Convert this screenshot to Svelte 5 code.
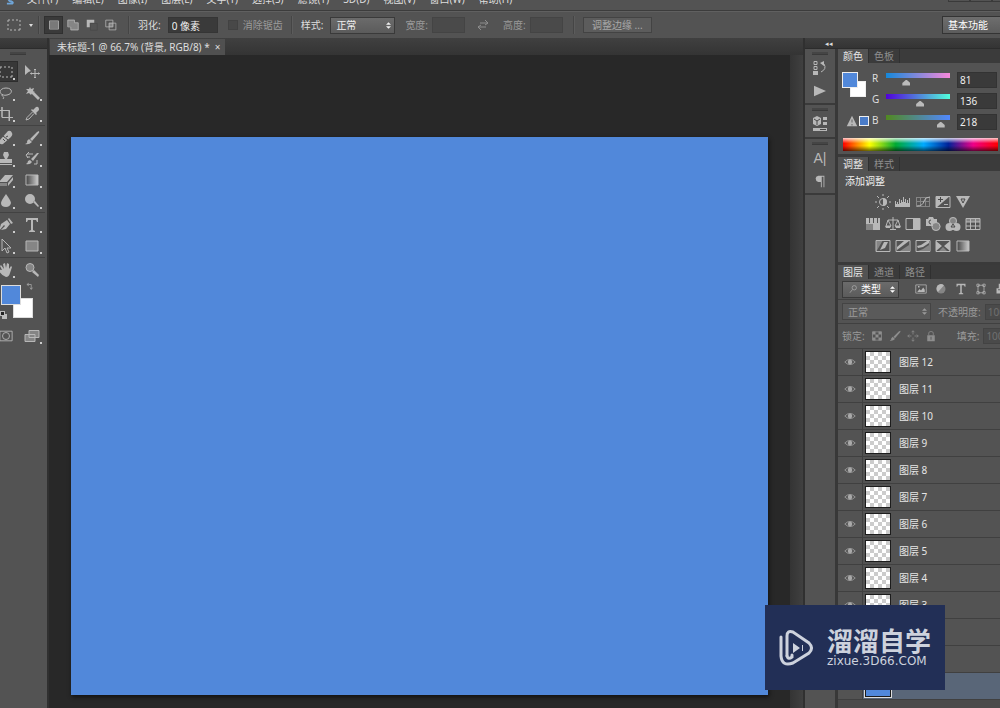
<script lang="ts">
  type Shape = { soft?: string; fill?: string; line?: string; dim?: string };

  const menus = ['文件(F)', '编辑(E)', '图像(I)', '图层(L)', '文字(Y)', '选择(S)', '滤镜(T)', '3D(D)', '视图(V)', '窗口(W)', '帮助(H)'];

  // All icons are drawn on a 16x16 grid
  const icons: Record<string, Shape> = {
    marquee: { line: 'M2 5V3H4M6 3H8M10 3H12M14 3V5M14 7V9M14 11V13H12M10 13H8M6 13H4M2 13V11M2 9V7' },
    move: { fill: 'M1 1L7 7L4.500 8L1 11Z', line: 'M11 5V14M6.500 9.500H15.500M10 6L11 5L12 6M10 13L11 14L12 13M7.500 8.500L6.500 9.500L7.500 10.500M14.500 8.500L15.500 9.500L14.500 10.500' },
    lasso: { line: 'M5 10C0 8 2 3 8 3C15 3 15 9 9 10C6 11 4 9 4 10C4 12 7 11 5 14' },
    wand: { fill: 'M6 7L8 5L16 13L14 15ZM6 2L7 4L10 3L9 6L11 7L8 8L7 10L5 8L2 9L4 6L2 4L5 4Z' },
    crop: { line: 'M4 1V11.500H15M1 4.500H11.500V15', soft: 'M3 1H5V11H3ZM10 4H12V15H10Z' },
    dropper: { fill: 'M9 4L12 1Q15 0 15 4L12 7L13 8L12 9L7 4L8 3Z', line: 'M8.500 6L3 11.500L2 14L5 13L10 7.500' },
    heal: { fill: 'M1 11L10 1Q13 0 14 3Q15 5 13 7L5 14Q1 15 1 11Z', dim: 'M5 6L10 10M10 6L8 7M5 9L7 11' },
    brush: { fill: 'M15 1Q16 2 14 4L8 11L6 9L13 2ZM5 9L8 12Q5 15 1 14Q4 13 3 11Z' },
    stamp: { fill: 'M6 1H10L11 4L9 8H14V12H2V8H7L5 4ZM2 13H14V14H2Z' },
    history: { fill: 'M15 2L9 10L7 8L13 2ZM6 9L8 11Q6 14 2 13Q4 12 4 10Z', line: 'M3 3H9M3 6H6M5 1L2 4L4 7M10 13H13V9' },
    eraser: { fill: 'M7 3H15L9 10H1ZM15 5V8L10 14V11Z', soft: 'M1 11H9V14H2Z' },
    gradient: { line: 'M2 3H14V13H2Z' },
    drop: { fill: 'M8 1Q13 8 13 10Q12 14 8 14Q3 14 3 10Q3 8 8 1Z' },
    dodge: { fill: 'M6 1A5 5 0 1 0 6 11A5 5 0 1 0 6 1ZM9 9L11 8L15 13L14 14Z' },
    pen: { fill: 'M1 14L3 7L9 3L12 7L8 12L3 13L7 9L6 8ZM10 2L11 1L15 6L13 7Z' },
    type: { fill: 'M2 1H14V5H13L12 3H9V13L11 14V15H5V14L7 13V3H4L3 5H2Z' },
    arrow: { line: 'M4 1V13L7 10L9 15L11 14L9 10H13Z' },
    rect: { soft: 'M2 3H14V13H2Z', line: 'M2 3H14V13H2Z' },
    hand: { fill: 'M4 8L2 4L3 3L6 7L5 2L7 1L8 6L9 1L11 2V7L13 4L14 5L12 11Q11 15 8 15Q4 14 1 9Q2 7 4 8Z' },
    zoom: { soft: 'M6 1.500A4 4 0 1 0 6 9.500A4 4 0 1 0 6 1.500', line: 'M6 1.500A4 4 0 1 0 6 9.500A4 4 0 1 0 6 1.500', fill: 'M10 8L15 13L14 15L8 10Z' },
    swap: { line: 'M4 4H10V11M6 2L3 4L6 6M8 9L10 12L12 9' },
    mask: { line: 'M1 2.500H15V13.500H1ZM8 4A4 4 0 1 0 8 12A4 4 0 1 0 8 4' },
    screens: { soft: 'M5 3H15V9H5ZM1 7H11V13H1Z', line: 'M5 2.500H15V9.500H5ZM1 6.500H11V13.500H1Z' },
    fresh: { soft: 'M2 3H14V13H2Z', line: 'M2 2.500H14V13.500H2Z' },
    add: { soft: 'M1 1H10V5H15V15H5V10H1Z', line: 'M1 1.500H10V5H15V14.500H5V10.500H1Z' },
    subtract: { fill: 'M1 1H11V5H5V11H1Z', dim: 'M6 6H15V15H6Z' },
    intersect: { soft: 'M5 5H11V11H5Z', line: 'M1 1.500H10.500V10.500H1ZM5.500 5.500H14.500V14.500H5.500Z' },
    exchange: { line: 'M5 6H13M10 3L13 6L10 8M11 10H3M6 13L3 10L6 8' },
    states: { line: 'M2 1.500H5V4.500H2ZM2 6.500H5V9.500H2ZM9 12Q15 9 12 4', fill: 'M1 11H6V15H1ZM8 3L12 1V6Z' },
    play: { fill: 'M0 1L16 8L0 15Z' },
    library: { fill: 'M5 0L9 2V8L5 10L1 8V2ZM11 1H15V4H11ZM11 6H15V9H11ZM1 12H15V15H1Z', dim: 'M2 3L5 5L8 3M5 5V9M8 13.500H14' },
    pilcrow: { fill: 'M6 2H13V15H12V3H10V15H9V9H6Q3 8 3 5Q3 3 6 2Z' },
    warn: { fill: 'M8 1L15 15H1Z', dim: 'M8 6V10M8 12V14' },
    sun: { line: 'M8 4.500A3.500 3.500 0 1 0 8 11.500A3.500 3.500 0 1 0 8 4.500M8 0V2M8 14V16M0 8H2M14 8H16M2 2L4 4M12 12L14 14M14 2L12 4M4 12L2 14', fill: 'M8 4A4 4 0 0 1 8 12Z' },
    levels: { fill: 'M0 13V7H1V10H2V8H3V10H4V5H5V9H6V6H7V8H8V3H9V8H10V5H11V9H12V6H13V9H14V4H15V13Z' },
    curves: { soft: 'M1 3H15V4H1ZM1 7H15V8H1ZM1 12H15V13H1ZM1 3H2V13H1ZM5 3H6V13H5ZM10 3H11V13H10ZM14 3H15V13H14Z', line: 'M2 12Q8 12 9 7Q10 3 15 3' },
    exposure: { fill: 'M1 2H15L1 14Z', line: 'M1 2.500H15V13.500H1ZM9 10.500H13', dim: 'M3 5.500H8M5.500 3V8' },
    vibrance: { fill: 'M1 2H15L8 14Z', dim: 'M6 5H10L8 9Z' },
    hue: { soft: 'M1 8H8V14H1Z', fill: 'M1 2H4V7H1ZM5 2H8V7H5ZM9 2H12V7H9ZM13 2H15V7H13ZM8 8H15V14H8ZM1 7H15V8H1Z' },
    balance: { line: 'M8 1V13M3 4H13M3 4L1 10H6ZM13 4L10 10H15ZM5 13.500H11', fill: 'M0 10H6L5 12H1ZM10 10H16L15 12H11Z' },
    bw: { line: 'M1 2.500H15V13.500H1Z', fill: 'M8 2H15V14H8Z' },
    filter: { fill: 'M1 3H3L4 1H8L9 3H12V7H8V10H1Z', soft: 'M11 6A4.500 4.500 0 1 0 11 15A4.500 4.500 0 1 0 11 6', line: 'M11 6.500A4 4 0 1 0 11 14.500A4 4 0 1 0 11 6.500', dim: 'M6 4A2 2 0 1 0 6 8' },
    mixer: { soft: 'M8 1A4 4 0 1 0 8 9A4 4 0 1 0 8 1', line: 'M8 1.500A3.500 3.500 0 1 0 8 8.500A3.500 3.500 0 1 0 8 1.500', fill: 'M4.500 7A4 4 0 1 0 4.500 15A4 4 0 1 0 4.500 7M11.500 7A4 4 0 1 0 11.500 15A4 4 0 1 0 11.500 7', dim: 'M8 8L6 11H10Z' },
    lookup: { soft: 'M1 2H15V6H1Z', line: 'M1 2.500H15V13.500H1ZM1 6H15M1 10H15M5.500 3V13M10.500 3V13' },
    invert: { line: 'M1 2.500H15V13.500H1Z', soft: 'M1 2H8L1 14Z', fill: 'M9 4H13L10 10L5 12L7 8Z' },
    poster: { line: 'M1 2.500H15V13.500H1Z', fill: 'M2 9L9 3H14L2 12Z', soft: 'M5 13L14 7V13Z' },
    threshold: { line: 'M1 2.500H15V13.500H1Z', fill: 'M2 8L6 7L12 3H14V5L8 9L3 10Z', soft: 'M3 13L8 11L14 7V13Z' },
    selective: { line: 'M1 2.500H15V13.500H1Z', fill: 'M1 3L7 8L1 13ZM15 3L9 8L15 13Z', soft: 'M4 13L8 9L12 13Z' },
    image: { line: 'M1 2.500H15V13.500H1Z', fill: 'M3 12L6 8L8 10L11 6L13 9V12ZM4 4H6V6H4Z' },
    half: { soft: 'M8 2A6 6 0 1 0 8 14A6 6 0 1 0 8 2', fill: 'M12 3A6 6 0 1 0 4 12Z' },
    path: { line: 'M4 3H12M4 13H12M4 4V12M12 4V12M2.500 1.500H5.500V4.500H2.500ZM10.500 1.500H13.500V4.500H10.500ZM2.500 11.500H5.500V14.500H2.500ZM10.500 11.500H13.500V14.500H10.500Z' },
    smart: { fill: 'M5 1H11V7H15V14H2V7H5Z', dim: 'M4 9H13' },
    checker: { line: 'M2 2.500H14V13.500H2Z', fill: 'M2 2H6V6H2ZM10 2H14V6H10ZM6 6H10V10H6ZM2 10H6V14H2ZM10 10H14V14H10Z' },
    cross: { line: 'M8 1V6M8 10V15M1 8H6M10 8H15M6 3L8 1L10 3M6 13L8 15L10 13M3 6L1 8L3 10M13 6L15 8L13 10' },
    lock: { line: 'M5 7V4Q5 2 8 2Q11 2 11 4V7', fill: 'M3 7H13V15H3Z', dim: 'M8 9V13' },
    search: { line: 'M10 2.500A3.500 3.500 0 1 0 10 9.500A3.500 3.500 0 1 0 10 2.500M7 9L3 14' },
    eye: { line: 'M1 8Q8 1 15 8Q8 15 1 8Z', fill: 'M8 5A3 3 0 1 0 8 11A3 3 0 1 0 8 5' }
  };

  const toolGroups = [
    ['marquee', 'move', 'lasso', 'wand', 'crop', 'dropper'],
    ['heal', 'brush', 'stamp', 'history', 'eraser', 'gradient', 'drop', 'dodge'],
    ['pen', 'type', 'arrow', 'rect'],
    ['hand', 'zoom']
  ];
  const noFlyout = ['move', 'zoom'];
  const selectionModes = ['fresh', 'add', 'subtract', 'intersect'];
  const adjustments = [
    ['sun', 'levels', 'curves', 'exposure', 'vibrance'],
    ['hue', 'balance', 'bw', 'filter', 'mixer', 'lookup'],
    ['invert', 'poster', 'threshold', 'selective', 'gradient']
  ];
  const layers = Array.from({ length: 12 }, (_, i) => `图层 ${12 - i}`);

  let activeTool = $state('marquee');
  let mode = $state('fresh');
  let color = $state([
    { name: 'R', value: 81 },
    { name: 'G', value: 136 },
    { name: 'B', value: 218 }
  ]);
  let current = $derived(`rgb(${color.map((c) => c.value).join(',')})`);
</script>

{#snippet icon(name: string, size = 'mid')}
  <svg class="icon {size}" viewBox="0 0 16 16" aria-hidden="true">
    {#if name === 'gradient'}
      <defs>
        <linearGradient id="fade"><stop stop-color="#444" /><stop offset="1" stop-color="#ccc" /></linearGradient>
      </defs>
      <rect x="2" y="3" width="12" height="10" fill="url(#fade)" />
    {/if}
    {#if icons[name].soft}<path class="soft" d={icons[name].soft} />{/if}
    {#if icons[name].fill}<path class="fill" d={icons[name].fill} />{/if}
    {#if icons[name].line}<path class="line" d={icons[name].line} />{/if}
    {#if icons[name].dim}<path class="dim" d={icons[name].dim} />{/if}
  </svg>
{/snippet}

{#snippet updown()}
  <svg class="updown" viewBox="0 0 6 8" aria-hidden="true"><path d="M0 3L3 0L6 3ZM0 5L3 8L6 5Z" /></svg>
{/snippet}

<div class="app" style:--current={current}>
  <nav class="menubar">
    <svg class="logo" viewBox="0 0 10 10" aria-hidden="true"><path d="M9 1H4Q1 2 4 5Q9 6 7 8H1" /></svg>
    {#each menus as menu}
      <button>{menu}</button>
    {/each}
    <span class="window_buttons"><i></i><i></i><i></i></span>
  </nav>

  <div class="options">
    <button class="preset" aria-label="工具预设">{@render icon('marquee')}<span class="caret"></span></button>
    <span class="divider"></span>
    <div class="modes">
      {#each selectionModes as m}
        <button class:active={mode === m} aria-label={m} onclick={() => (mode = m)}>{@render icon(m, 'small')}</button>
      {/each}
    </div>
    <span class="divider"></span>
    <label class="field">羽化: <input class="feather" value="0 像素" /></label>
    <label class="check off"><input type="checkbox" disabled />消除锯齿</label>
    <span class="divider"></span>
    <label class="field">样式:
      <span class="select style_select"><select><option>正常</option></select>{@render updown()}</span>
    </label>
    <label class="field off">宽度: <input class="dimension" disabled /></label>
    <span class="exchange off">{@render icon('exchange')}</span>
    <label class="field off">高度: <input class="dimension" disabled /></label>
    <span class="divider"></span>
    <button class="refine" disabled>调整边缘 ...</button>
    <button class="workspace">基本功能</button>
  </div>

  <main>
    <aside class="tools">
      <div class="strip"></div>
      <span class="grip"></span>
      <div class="tool_list">
        {#each toolGroups as group}
          <div class="group">
            {#each group as tool}
              <button class="tool" class:active={activeTool === tool} aria-label={tool} onclick={() => (activeTool = tool)}>
                {@render icon(tool)}
                {#if !noFlyout.includes(tool)}<span class="corner"></span>{/if}
              </button>
            {/each}
          </div>
        {/each}
      </div>
      <div class="swatches">
        <span class="back"></span>
        <span class="front"></span>
        <span class="swap">{@render icon('swap', 'tiny')}</span>
        <span class="reset"></span>
      </div>
      <div class="tool_list">
        <div class="group">
          <button class="tool" aria-label="快速蒙版">{@render icon('mask', 'adjust')}</button>
          <button class="tool" aria-label="屏幕模式">{@render icon('screens')}<span class="corner"></span></button>
        </div>
      </div>
    </aside>

    <section class="document">
      <div class="doc_tabs">
        <div class="doc_tab">未标题-1 @ 66.7% (背景, RGB/8) * <button aria-label="关闭">×</button></div>
      </div>
      <div class="stage">
        <div class="viewport"><div class="canvas"></div></div>
        <div class="scrollbar"></div>
      </div>
    </section>

    <div class="dock">
      <div class="strip"><button aria-label="展开面板">◂◂</button></div>
      <div class="dock_body">
        <div class="rail">
          <div class="rail_group">
            <span class="grip"></span>
            <button aria-label="历史记录">{@render icon('states')}</button>
            <button aria-label="动作">{@render icon('play', 'small')}</button>
          </div>
          <div class="rail_group">
            <span class="grip"></span>
            <button class="single" aria-label="属性">{@render icon('library')}</button>
          </div>
          <div class="rail_group">
            <span class="grip"></span>
            <button class="glyph" aria-label="字符">A|</button>
            <button aria-label="段落">{@render icon('pilcrow', 'adjust')}</button>
          </div>
        </div>

        <div class="panels">
          <section class="panel">
            <div class="tabs"><button class="active">颜色</button><button>色板</button></div>
            <div class="color_body">
              <div class="color_left">
                <div class="pair"><span class="back"></span><span class="front"></span></div>
                <div class="gamut">{@render icon('warn', 'small')}<span></span></div>
              </div>
              <div class="channels">
                {#each color as channel}
                  <label class="channel">
                    <span>{channel.name}</span>
                    <input class="range {channel.name}" type="range" min="0" max="255" bind:value={channel.value} />
                    <input class="amount" aria-label={channel.name} bind:value={channel.value} />
                  </label>
                {/each}
              </div>
            </div>
            <div class="spectrum"></div>
          </section>

          <section class="panel">
            <div class="tabs"><button class="active">调整</button><button>样式</button></div>
            <div class="adjust_body">
              <p>添加调整</p>
              {#each adjustments as row}
                <div class="adjust_row">
                  {#each row as name}
                    <button aria-label={name}>{@render icon(name)}</button>
                  {/each}
                </div>
              {/each}
            </div>
          </section>

          <section class="panel layers">
            <div class="tabs"><button class="active">图层</button><button>通道</button><button>路径</button></div>
            <div class="row filter">
              <span class="select kind">{@render icon('search', 'tiny')}
                <select aria-label="类型"><option>类型</option></select>{@render updown()}
              </span>
              <div class="kinds">
                {#each ['image', 'half', 'type', 'path', 'smart'] as name}
                  <button aria-label={name}>{@render icon(name, 'small')}</button>
                {/each}
              </div>
            </div>
            <div class="row blend off">
              <span class="select blend_select"><select aria-label="混合模式" disabled><option>正常</option></select>{@render updown()}</span>
              <label>不透明度: <input value="100%" disabled /></label>
            </div>
            <div class="row locks off">
              <span>锁定:</span>
              {#each ['checker', 'brush', 'cross', 'lock'] as name}
                <button disabled aria-label={name}>{@render icon(name, 'small')}</button>
              {/each}
              <label>填充: <input value="100%" disabled /></label>
            </div>
            <ul>
              {#each layers as layer}
                <li>
                  <button class="eye" aria-label="显示">{@render icon('eye', 'small')}</button>
                  <span class="thumb"></span>{layer}
                </li>
              {/each}
              <li class="selected">
                <button class="eye" aria-label="显示">{@render icon('eye', 'small')}</button>
                <span class="thumb solid"></span>
              </li>
            </ul>
          </section>
        </div>
      </div>
    </div>
  </main>

  <div class="watermark">
    <svg viewBox="0 0 36 38" aria-hidden="true">
      <path d="M8 27V7Q8 1 14 3L30 14Q35 19 30 24L14 34Q3 38 2 27V8" />
      <path d="M8 27Q9 31 13 28V26" />
      <path class="solid" d="M14 14L21 19L14 24ZM23 16H24V22H23Z" />
    </svg>
    <div>
      <strong>溜溜自学</strong>
      <span>zixue.3D66.COM</span>
    </div>
  </div>
</div>

<style>
  :global(body) {
    background: #535353;
  }

  .app {
    position: relative;
    height: 100vh;
    display: flex;
    flex-direction: column;
    overflow: hidden;
    background: #535353;
    color: #dedede;
    font: 10px/14px 'Noto Sans', 'Noto Sans CJK SC', sans-serif;
  }

  .app * {
    box-sizing: border-box;
  }

  button,
  input,
  select {
    font: inherit;
    color: inherit;
    margin: 0;
    padding: 0;
    border: none;
    border-radius: 0;
    background: none;
  }

  button {
    display: flex;
    align-items: center;
    justify-content: center;
    white-space: nowrap;
  }

  .off {
    color: #9a9a9a;
  }

  .off .icon {
    color: #8e8e8e;
  }

  .icon {
    display: block;
    flex: none;
    width: 16px;
    height: 16px;
    color: #b8b8b8;
  }

  .icon.adjust {
    width: 14px;
    height: 14px;
  }

  .icon.small {
    width: 12px;
    height: 12px;
  }

  .icon.tiny {
    width: 10px;
    height: 10px;
  }

  .fill,
  .soft {
    fill: currentColor;
  }

  .soft {
    opacity: 0.5;
  }

  .line {
    fill: none;
    stroke: currentColor;
  }

  .dim {
    fill: none;
    stroke: #484848;
  }

  /* menu bar */
  .menubar {
    flex: none;
    display: flex;
    align-items: flex-end;
    gap: 14px;
    height: 11px;
    padding: 0 0 4px 6px;
    overflow: hidden;
    border-bottom: 1px solid #3c3c3c;
  }

  .logo {
    width: 9px;
    height: 10px;
    margin-right: -2px;
    fill: none;
    stroke: #6fa5d8;
    stroke-width: 2;
  }

  .window_buttons {
    display: flex;
    align-self: flex-start;
    margin: 0 -14px 0 auto;
  }

  .window_buttons i {
    width: 22px;
    height: 2px;
    border: 1px solid #3a3a3a;
    border-top: none;
  }

  /* options bar */
  .options {
    flex: none;
    display: flex;
    align-items: center;
    height: 27px;
    padding-left: 6px;
    border-top: 1px solid #606060;
    white-space: nowrap;
  }

  .preset {
    gap: 7px;
    margin-right: 5px;
  }

  .caret {
    border: 2px solid transparent;
    border-top: 3px solid #ddd;
    border-bottom: none;
  }

  .divider {
    width: 2px;
    height: 18px;
    margin-right: 8px;
    background: #454545;
    border-right: 1px solid #5c5c5c;
  }

  .modes {
    display: flex;
    margin: 0 8px 0 -4px;
  }

  .modes button {
    width: 19px;
    height: 18px;
  }

  .modes .active {
    background: #3a3a3a;
    outline: 1px solid #303030;
    outline-offset: -1px;
  }

  .field {
    display: flex;
    align-items: center;
    gap: 7px;
    margin-right: 10px;
  }

  .field input {
    height: 16px;
    padding-left: 3px;
    background: #3a3a3a;
    border: 1px solid #353535;
    color: #f0f0f0;
  }

  .field .feather {
    width: 50px;
  }

  .off input.dimension {
    width: 33px;
    background: #4a4a4a;
    border-color: #444;
  }

  .field.off {
    gap: 4px;
  }

  .check {
    display: flex;
    align-items: center;
    gap: 5px;
    margin-right: 8px;
  }

  .check input {
    appearance: none;
    width: 10px;
    height: 10px;
    background: #484848;
    border: 1px solid #424242;
  }

  .exchange {
    margin-right: 12px;
  }

  .select {
    display: flex;
    align-items: center;
    height: 17px;
    padding: 0 3px 0 5px;
    background: linear-gradient(#6b6b6b, #5b5b5b);
    border: 1px solid #3a3a3a;
  }

  .select select {
    appearance: none;
    flex: 1;
    min-width: 0;
    height: 15px;
    opacity: 1;
  }

  .updown {
    width: 5px;
    height: 7px;
    fill: currentColor;
  }

  .style_select {
    width: 65px;
    color: #f0f0f0;
  }

  .refine {
    width: 69px;
    height: 16px;
    background: #5c5c5c;
    border: 1px solid #434343;
    color: #a8a8a8;
  }

  .workspace {
    width: 68px;
    height: 18px;
    margin: 0 -10px 0 auto;
    padding-right: 16px;
    background: linear-gradient(#6e6e6e, #5c5c5c);
    border: 1px solid #343434;
    color: #fff;
  }

  main {
    flex: 1;
    min-height: 0;
    display: flex;
  }

  .strip {
    flex: none;
    height: 11px;
    background: linear-gradient(#3e3e3e, #343434);
    border-bottom: 1px solid #2c2c2c;
  }

  .grip {
    display: block;
    flex: none;
    width: 16px;
    height: 3px;
    background: #454545;
    border-bottom: 1px solid #3a3a3a;
  }

  /* tool column */
  .tools {
    flex: none;
    width: 49px;
    border-right: 2px solid #303030;
    overflow: hidden;
  }

  .tools .grip {
    margin: 3px 0 6px 10px;
  }

  .tool_list {
    margin-left: -7px;
    width: 52px;
  }

  .group {
    display: grid;
    grid-template-columns: 1fr 1fr;
    padding-bottom: 1px;
  }

  .group + .group {
    border-top: 1px solid #424242;
    padding-top: 1px;
  }

  .tool {
    position: relative;
    height: 21px;
  }

  .tool.active {
    background: #383838;
    outline: 1px solid #2d2d2d;
    outline-offset: -1px;
  }

  .tool:nth-child(odd) {
    margin-right: 1px;
  }

  .corner {
    position: absolute;
    right: 3px;
    bottom: 2px;
    width: 2px;
    height: 2px;
    background: #ccc;
  }

  .swatches {
    position: relative;
    height: 44px;
  }

  .swatches .front,
  .swatches .back {
    position: absolute;
    top: 4px;
    left: 1px;
    width: 20px;
    height: 20px;
    background: var(--current);
    border: 1px solid #ddd;
  }

  .swatches .back {
    top: 17px;
    left: 13px;
    background: #fff;
  }

  .swap {
    position: absolute;
    top: 1px;
    left: 25px;
  }

  .reset {
    position: absolute;
    top: 30px;
    left: 0;
    width: 5px;
    height: 5px;
    background: #222;
    border: 1px solid #bbb;
    box-shadow: 2px 3px #bbb;
  }

  /* document window */
  .document {
    flex: 1;
    min-width: 0;
    display: flex;
    flex-direction: column;
  }

  .doc_tabs {
    display: flex;
    height: 17px;
    padding: 1px 0 0 1px;
    background: linear-gradient(#404040, #343434);
  }

  .doc_tab {
    display: flex;
    align-items: center;
    gap: 5px;
    padding: 0 5px 0 7px;
    background: #505050;
    white-space: nowrap;
  }

  .stage {
    flex: 1;
    display: flex;
    background: #282828;
  }

  .viewport {
    flex: 1;
    display: flex;
    padding: 82px 22px 13px;
  }

  .canvas {
    flex: 1;
    background: var(--current);
    box-shadow: 1px 2px 4px #111;
  }

  .scrollbar {
    width: 13px;
    background: linear-gradient(90deg, #343434, #404040);
  }

  /* right dock */
  .dock {
    flex: none;
    width: 197px;
    display: flex;
    flex-direction: column;
    border-left: 2px solid #303030;
  }

  .dock .strip button {
    margin-left: 20px;
    height: 11px;
    font-size: 7px;
  }

  .dock_body {
    flex: 1;
    min-height: 0;
    display: flex;
  }

  .rail {
    flex: none;
    width: 33px;
    border-right: 3px solid #383838;
  }

  .rail_group {
    display: flex;
    flex-direction: column;
    align-items: center;
    padding: 3px 0 1px;
    border-bottom: 2px solid #3a3a3a;
  }

  .rail_group button {
    height: 23px;
  }

  .rail_group .grip {
    margin-bottom: 1px;
  }

  .rail_group .single {
    height: 24px;
  }

  .rail .glyph {
    font: 14px/20px 'Liberation Sans', sans-serif;
    color: #b8b8b8;
  }

  .panels {
    flex: 1;
    min-width: 0;
    display: flex;
    flex-direction: column;
    overflow: hidden;
  }

  .panel {
    flex: none;
    border-bottom: 3px solid #3a3a3a;
  }

  .tabs {
    display: flex;
    height: 14px;
    background: #3b3b3b;
  }

  .tabs button {
    padding: 0 5px;
    border-right: 1px solid #303030;
    color: #8e8e8e;
  }

  .tabs .active {
    background: #535353;
    color: #e6e6e6;
  }

  .color_body {
    display: flex;
    padding: 6px 3px 3px 4px;
  }

  .color_left {
    flex: none;
    width: 30px;
  }

  .pair {
    position: relative;
    height: 44px;
  }

  .pair span {
    position: absolute;
    top: 3px;
    left: 0;
    width: 16px;
    height: 16px;
    background: var(--current);
    border: 1px solid #eee;
  }

  .pair .back {
    top: 12px;
    left: 8px;
    background: #fff;
  }

  .gamut {
    display: flex;
    align-items: center;
    gap: 1px;
    padding: 2px 0 0 4px;
  }

  .gamut span {
    width: 10px;
    height: 10px;
    background: #4a7cc8;
    border: 1px solid #eee;
  }

  .channels {
    flex: 1;
    min-width: 0;
  }

  .channel {
    display: flex;
    align-items: center;
    gap: 3px;
    height: 21px;
  }

  .channel span {
    width: 7px;
    line-height: 18px;
    align-self: flex-start;
  }

  .range {
    appearance: none;
    flex: 1;
    min-width: 0;
    height: 14px;
    align-self: flex-start;
    margin: 4px 0 0;
    background: linear-gradient(90deg, #1488da, #f888da) center top / calc(100% - 8px) 5px no-repeat;
  }

  .range.G {
    background-image: linear-gradient(90deg, #5100da, #51ffda);
  }

  .range.B {
    background-image: linear-gradient(90deg, #518820, #5188ff);
  }

  .range::-webkit-slider-thumb {
    appearance: none;
    width: 8px;
    height: 6px;
    margin-top: 5px;
    background: #bbb;
    clip-path: polygon(50% 0, 100% 60%, 100% 100%, 0 100%, 0 60%);
  }

  .amount {
    width: 40px;
    height: 16px;
    padding-left: 2px;
    background: #3a3a3a;
    border: 1px solid #333;
    color: #eee;
  }

  .spectrum {
    height: 13px;
    margin: 3px 2px 3px 5px;
    background:
      linear-gradient(#fffc, #fff0 40%, #0000 60%, #0009),
      linear-gradient(90deg, #f00, #ff0 17%, #0a3 34%, #0af 52%, #029 68%, #e08 84%, #f00);
  }

  .adjust_body {
    height: 91px;
    padding: 2px 0 0 7px;
  }

  .adjust_body p {
    margin: 0 0 2px;
    line-height: 16px;
    color: #f0f0f0;
  }

  .adjust_row {
    display: flex;
    justify-content: center;
    gap: 4px;
    height: 22px;
  }

  .layers {
    flex: 1;
    border: none;
    background: #4b4b4b;
  }

  .row {
    display: flex;
    align-items: center;
    height: 24px;
    padding-left: 4px;
    background: #535353;
    border-bottom: 1px solid #404040;
    white-space: nowrap;
  }

  .row.filter {
    height: 21px;
  }

  .row.locks {
    height: 25px;
    gap: 6px;
  }

  .row label {
    display: flex;
    align-items: center;
    gap: 4px;
  }

  .row input {
    flex: none;
    width: 40px;
    height: 16px;
    padding-left: 2px;
    background: #4a4a4a;
    border: 1px solid #434343;
    color: #707070;
  }

  .locks label {
    margin-left: 14px;
  }

  .kind {
    width: 57px;
    flex: none;
    gap: 3px;
    color: #fff;
  }

  .kinds {
    display: flex;
    gap: 8px;
    margin-left: 16px;
  }

  .blend_select {
    flex: none;
    width: 89px;
    margin-right: 7px;
    background: #5a5a5a;
    border-color: #444;
  }

  ul {
    margin: 0;
    padding: 0;
    list-style: none;
  }

  li {
    display: flex;
    align-items: center;
    height: 27px;
    background: #535353;
    border-bottom: 1px solid #404040;
    color: #e6e6e6;
  }

  .eye {
    width: 25px;
    height: 26px;
    border-right: 1px solid #404040;
  }

  .eye .icon {
    color: #aaa;
  }

  .thumb {
    width: 26px;
    height: 22px;
    margin: 0 8px 0 2px;
    border: 1px solid #1c1c1c;
    background: conic-gradient(#ccc 25%, #fff 0 50%, #ccc 0 75%, #fff 0) 0 0 / 8px 8px;
  }

  .thumb.solid {
    background: var(--current);
    outline: 1px solid #ddd;
  }

  .selected {
    background: linear-gradient(90deg, #535353 25px, #596678 25px);
  }

  .watermark {
    position: absolute;
    right: 55px;
    bottom: 18px;
    display: flex;
    align-items: center;
    gap: 12px;
    width: 180px;
    height: 85px;
    padding-left: 14px;
    background: #222f56;
    color: #cdd2dd;
  }

  .watermark svg {
    width: 36px;
    height: 38px;
    fill: none;
    stroke: #cdd2dd;
    stroke-width: 3;
    stroke-linecap: round;
  }

  .watermark .solid {
    fill: #cdd2dd;
    stroke: none;
  }

  .watermark strong {
    display: block;
    font-size: 26px;
    line-height: 26px;
  }

  .watermark span {
    display: block;
    font: 12px/14px 'DejaVu Sans', sans-serif;
  }
</style>
